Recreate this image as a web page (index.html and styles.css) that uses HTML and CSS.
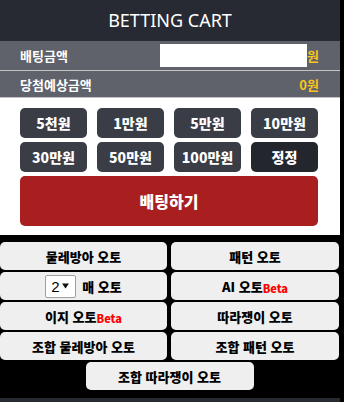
FILE: index.html
```html
<!DOCTYPE html>
<html lang="ko">
<head>
<meta charset="utf-8">
<title>Betting Cart</title>
<link rel="stylesheet" href="styles.css">
</head>
<body>
<div class="cart">
  <div class="cart-head">BETTING CART</div>
  <div class="info-row row-bet">
    <span class="label">배팅금액</span>
    <span class="value"><span class="amount-box"></span>원</span>
  </div>
  <div class="info-row row-win">
    <span class="label">당첨예상금액</span>
    <span class="value">0원</span>
  </div>
  <div class="panel">
    <div class="chips">
      <button class="chip">5천원</button>
      <button class="chip">1만원</button>
      <button class="chip">5만원</button>
      <button class="chip">10만원</button>
      <button class="chip">30만원</button>
      <button class="chip">50만원</button>
      <button class="chip">100만원</button>
      <button class="chip chip-reset">정정</button>
    </div>
    <button class="bet-btn">배팅하기</button>
  </div>
  <div class="autos">
    <button class="auto">물레방아 오토</button>
    <button class="auto">패턴 오토</button>
    <button class="auto"><span class="fake-select"><span class="sel-val">2</span><svg class="sel-arrow" width="7" height="6" viewBox="0 0 7 6"><path d="M0 0.5 L7 0.5 L3.5 5.5 Z" fill="#111"/></svg></span>매 오토</button>
    <button class="auto">AI 오토<span class="beta">Beta</span></button>
    <button class="auto">이지 오토<span class="beta">Beta</span></button>
    <button class="auto">따라쟁이 오토</button>
    <button class="auto">조합 물레방아 오토</button>
    <button class="auto">조합 패턴 오토</button>
    <button class="auto auto-wide">조합 따라쟁이 오토</button>
  </div>
  <div class="foot"></div>
</div>
</body>
</html>
```
FILE: styles.css
```css
html, body {
  margin: 0;
  padding: 0;
  background: #000;
}
body {
  font-family: "Noto Sans", "Noto Sans CJK KR", sans-serif;
  width: 344px;
  height: 402px;
  overflow: hidden;
}
.cart {
  width: 340px;
  display: flex;
  flex-direction: column;
}
.cart-head {
  height: 41px;
  background: #272a33;
  color: #fff;
  font-size: 18px;
  line-height: 41px;
  text-align: center;
}
.info-row {
  display: flex;
  align-items: center;
  justify-content: space-between;
  background: #5f626a;
  padding: 0 21px 0 20px;
  border-bottom: 1px solid #c4c4c4;
  font-family: "Noto Sans CJK KR", sans-serif;
  font-weight: bold;
  font-size: 13px;
}
.row-bet { height: 29px; }
.row-win { height: 26px; }
.label { color: #fff; }
.value {
  color: #f7c61f;
  display: flex;
  align-items: center;
}
.amount-box {
  display: block;
  width: 147px;
  height: 23px;
  background: #fff;
}
.panel {
  background: #fff;
  padding: 10px 22px 9px 20px;
  display: flex;
  flex-direction: column;
  gap: 4px;
}
.chips {
  display: grid;
  grid-template-columns: repeat(4, 1fr);
  grid-auto-rows: 30px;
  gap: 4px 10px;
}
.chip {
  border: 0;
  border-radius: 5px;
  background: #3a3d46;
  color: #fff;
  font-family: "Noto Sans CJK KR", sans-serif;
  font-weight: 900;
  font-size: 14px;
  padding: 0;
}
.chip-reset { background: #23262d; }
.bet-btn {
  height: 50px;
  border: 0;
  border-radius: 5px;
  background: #a91f1f;
  color: #fff;
  font-family: "Noto Sans CJK KR", sans-serif;
  font-weight: 900;
  font-size: 16px;
  padding: 0;
}
.autos {
  display: grid;
  grid-template-columns: 167px 168px;
  grid-auto-rows: 28px;
  gap: 2px 4px;
  padding-top: 7px;
  height: 156px;
  align-content: start;
}
.auto {
  border: 0;
  border-radius: 5px;
  background: #efefef;
  color: #000;
  font-family: "Noto Sans CJK KR", sans-serif;
  font-weight: 900;
  font-size: 13px;
  padding: 0;
  display: flex;
  align-items: center;
  justify-content: center;
}
.auto-wide {
  grid-column: 1 / span 2;
  justify-self: center;
  width: 168px;
}
.beta {
  color: #f00;
  font-size: 11px;
  margin-top: 3px;
}
.fake-select {
  display: inline-flex;
  align-items: center;
  justify-content: space-between;
  box-sizing: border-box;
  width: 31px;
  height: 23px;
  border: 1px solid #a0a0a0;
  border-radius: 2px;
  background: #fff;
  padding: 0 6px 0 5px;
  margin-right: 6px;
  font-family: "Liberation Sans", sans-serif;
  font-weight: normal;
  font-size: 15px;
}
.sel-arrow { display: block; }
.foot {
  height: 4px;
  background: #272a33;
}
```
